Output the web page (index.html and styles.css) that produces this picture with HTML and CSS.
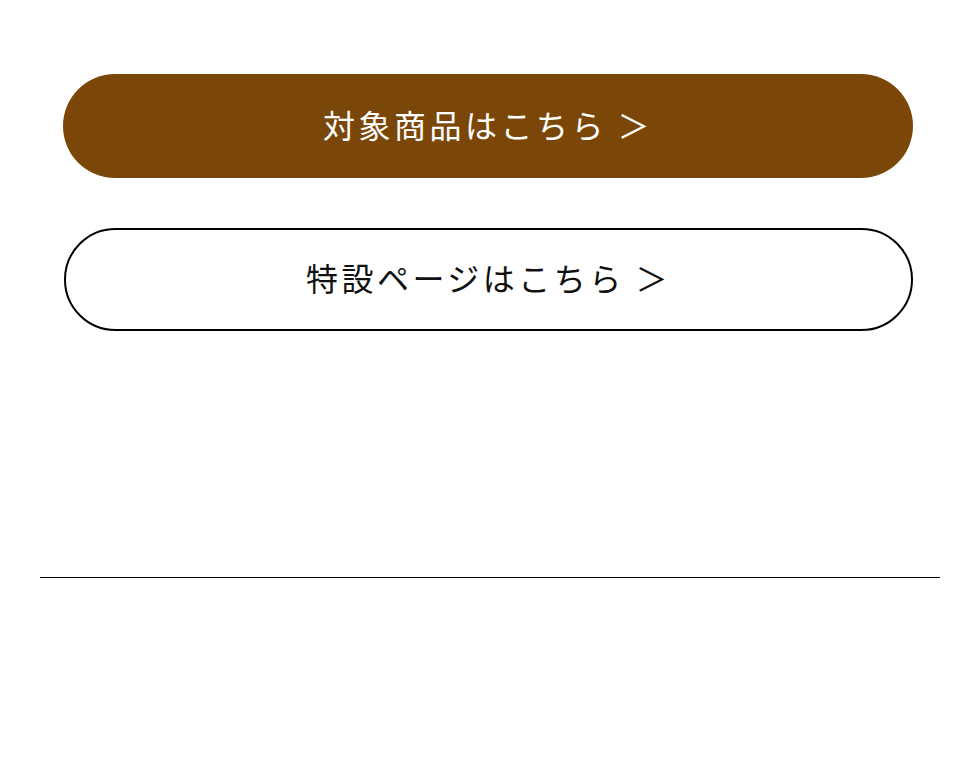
FILE: index.html
```html
<!DOCTYPE html>
<html lang="ja">
<head>
<meta charset="utf-8">
<link rel="stylesheet" href="styles.css">
</head>
<body>
<main class="page">
  <div class="buttons">
    <a class="btn btn-filled" href="#">対象商品はこちら ＞</a>
    <a class="btn btn-outline" href="#">特設ページはこちら ＞</a>
  </div>
  <hr class="divider">
</main>
</body>
</html>
```

FILE: styles.css
```css
html, body {
  margin: 0;
  padding: 0;
  background: #fff;
}
.page {
  width: 980px;
  height: 763px;
  font-family: "Noto Sans CJK JP", "Noto Sans", sans-serif;
}
.buttons {
  display: flex;
  flex-direction: column;
  gap: 50px;
  padding: 74px 0 0 63px;
  width: 850px;
}
.btn {
  display: flex;
  align-items: center;
  justify-content: center;
  box-sizing: border-box;
  width: 850px;
  border-radius: 52px;
  text-decoration: none;
  font-size: 32px;
  font-weight: 400;
  letter-spacing: 3.5px;
  line-height: 1;
  padding-bottom: 5px;
}
.btn-filled {
  height: 104px;
  background: #7a4708;
  color: #fff;
}
.btn-outline {
  height: 103px;
  border: 2px solid #000;
  color: #111;
  margin-left: 1px;
  width: 849px;
}
.divider {
  margin: 246px 0 0 40px;
  width: 900px;
  border: 0;
  border-top: 1px solid #000;
  height: 0;
}
```
